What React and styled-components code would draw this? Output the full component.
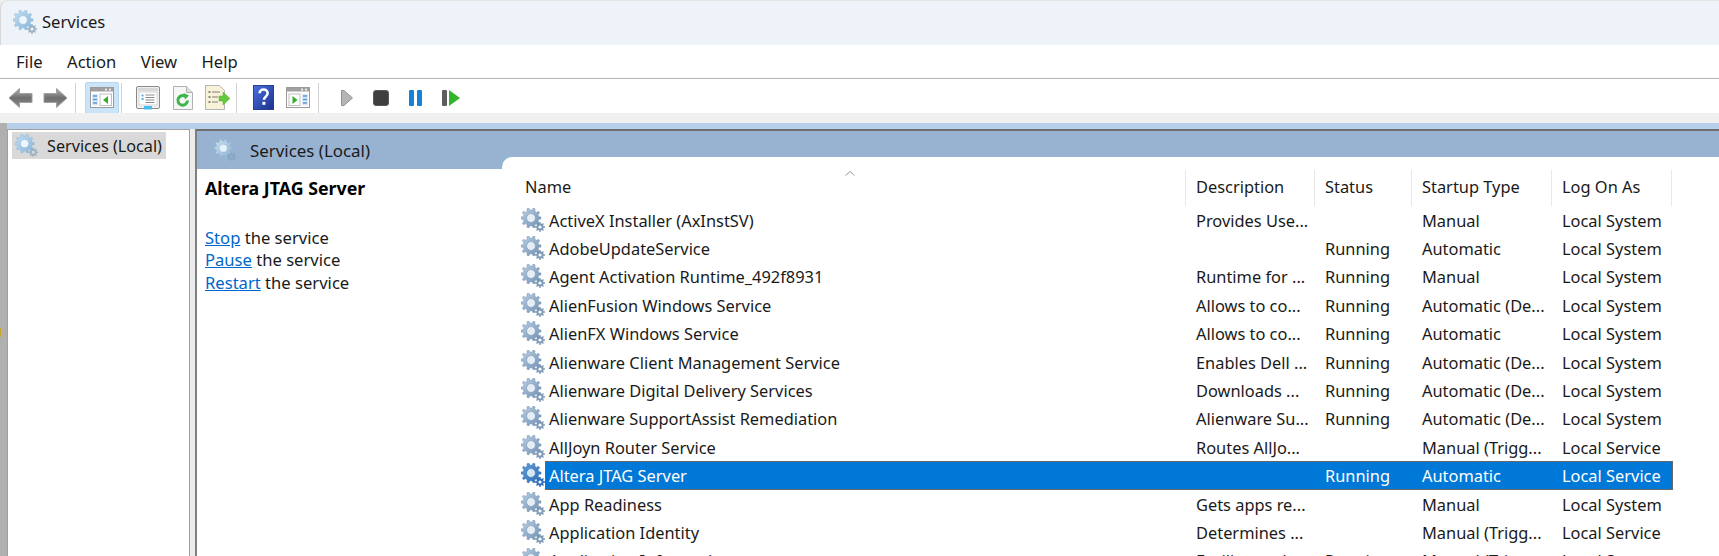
import React from "react";
import styled, { createGlobalStyle } from "styled-components";

const services = [
  { name: "ActiveX Installer (AxInstSV)", description: "Provides Use...", status: "", startup: "Manual", logon: "Local System" },
  { name: "AdobeUpdateService", description: "", status: "Running", startup: "Automatic", logon: "Local System" },
  { name: "Agent Activation Runtime_492f8931", description: "Runtime for ...", status: "Running", startup: "Manual", logon: "Local System" },
  { name: "AlienFusion Windows Service", description: "Allows to co...", status: "Running", startup: "Automatic (De...", logon: "Local System" },
  { name: "AlienFX Windows Service", description: "Allows to co...", status: "Running", startup: "Automatic", logon: "Local System" },
  { name: "Alienware Client Management Service", description: "Enables Dell ...", status: "Running", startup: "Automatic (De...", logon: "Local System" },
  { name: "Alienware Digital Delivery Services", description: "Downloads ...", status: "Running", startup: "Automatic (De...", logon: "Local System" },
  { name: "Alienware SupportAssist Remediation", description: "Alienware Su...", status: "Running", startup: "Automatic (De...", logon: "Local System" },
  { name: "AllJoyn Router Service", description: "Routes AllJo...", status: "", startup: "Manual (Trigg...", logon: "Local Service" },
  { name: "Altera JTAG Server", description: "", status: "Running", startup: "Automatic", logon: "Local Service", selected: true },
  { name: "App Readiness", description: "Gets apps re...", status: "", startup: "Manual", logon: "Local System" },
  { name: "Application Identity", description: "Determines ...", status: "", startup: "Manual (Trigg...", logon: "Local Service" },
  { name: "Application Information", description: "Facilitates th...", status: "Running", startup: "Manual (Trigg...", logon: "Local System" }
];

const columns = [640, 129, 97, 140, 120];

const gearPath = (cx, cy, outer, inner, hole, teeth) => {
  const step = (Math.PI * 2) / teeth;
  let d = "";
  for (let i = 0; i < teeth; i++) {
    const a = i * step;
    const pts = [
      [inner, a - step * 0.5],
      [inner, a - step * 0.28],
      [outer, a - step * 0.17],
      [outer, a + step * 0.17],
      [inner, a + step * 0.28]
    ];
    pts.forEach(([r, t], j) => {
      const x = (cx + r * Math.cos(t)).toFixed(2);
      const y = (cy + r * Math.sin(t)).toFixed(2);
      d += `${i === 0 && j === 0 ? "M" : "L"}${x} ${y}`;
    });
  }
  d += "Z";
  d += `M${cx + hole} ${cy}A${hole} ${hole} 0 1 0 ${cx - hole} ${cy}A${hole} ${hole} 0 1 0 ${cx + hole} ${cy}Z`;
  return d;
};

const BIG_GEAR = gearPath(10, 10, 10, 7.8, 4.4, 10);
const SMALL_GEAR = gearPath(19, 19, 5, 3.6, 1.6, 8);

const GearIcon = ({ size = 25, tone = "normal" }) => {
  const id = `gear-${tone}`;
  const colors = {
    normal: ["#bcd0e4", "#6f8fb2", "#7f9ab8", "#e6eef5"],
    soft: ["#c5e0f3", "#86b4da", "#9cb3c4", "#eef6fb"],
    muted: ["#c9e2f2", "#8fb4d2", "#86a6c2", "#e6f2f9"],
    selected: ["#5f9fd6", "#2e6cb4", "#2f70b8", "#d5e6f5"]
  }[tone];
  return (
    <svg width={size} height={size} viewBox="0 0 25 25">
      <defs>
        <linearGradient id={id} x1="0" y1="0" x2="1" y2="1">
          <stop offset="0" stopColor={colors[0]} />
          <stop offset="1" stopColor={colors[1]} />
        </linearGradient>
      </defs>
      <path d={SMALL_GEAR} fill={colors[2]} fillRule="evenodd" />
      <circle cx="10" cy="10" r="4.6" fill={colors[3]} />
      <path d={BIG_GEAR} fill={`url(#${id})`} fillRule="evenodd" stroke={colors[1]} strokeWidth="0.5" />
    </svg>
  );
};

const ArrowIcon = ({ flip }) => (
  <svg width="25" height="22" viewBox="0 0 25 22" style={flip ? { transform: "scaleX(-1)" } : undefined}>
    <defs>
      <linearGradient id="arrow-grey" x1="0" y1="0" x2="0" y2="1">
        <stop offset="0" stopColor="#b0b0b0" />
        <stop offset="0.5" stopColor="#6e6e6e" />
        <stop offset="1" stopColor="#8c8c8c" />
      </linearGradient>
    </defs>
    <path d="M1 11 11.500 1.500v5h12.500v9H11.500v5z" fill="url(#arrow-grey)" stroke="#a0a0a0" strokeWidth="1" strokeLinejoin="round" />
  </svg>
);

const PanelIcon = ({ right }) => (
  <svg width="24" height="21" viewBox="0 0 24 21">
    <rect x="0.5" y="0.5" width="23" height="20" fill="#fff" stroke="#9a9a9a" />
    <rect x="1" y="1" width="22" height="3.500" fill="#a0a0a0" />
    <rect x="15" y="1.600" width="2" height="2" fill="#e8e8e8" />
    <rect x="19" y="1.600" width="2" height="2" fill="#e8e8e8" />
    {right ? (
      <>
        <rect x="3" y="7" width="11" height="11.500" fill="#fff" stroke="#c0c0c0" />
        <path d="M6.500 9 11.500 13l-5 4z" fill="#33b02a" />
        <rect x="16" y="7" width="6" height="11.500" fill="#d8e8f6" />
        <path d="M17 9h4M17 12.500h4M17 16h4" stroke="#5c9ad8" strokeWidth="1.600" />
      </>
    ) : (
      <>
        <rect x="2" y="7" width="6" height="11.500" fill="#d8e8f6" />
        <path d="M3 9h4M3 12.500h4M3 16h4" stroke="#5c9ad8" strokeWidth="1.600" />
        <rect x="10" y="7" width="11.500" height="11.500" fill="#fff" stroke="#c0c0c0" />
        <path d="M18 9 13 13l5 4z" fill="#33b02a" />
      </>
    )}
  </svg>
);

const PropertiesIcon = () => (
  <svg width="24" height="24" viewBox="0 0 24 24">
    <rect x="0.5" y="0.5" width="23" height="22" rx="1.500" fill="#f0f0f0" stroke="#8a8a8a" />
    <rect x="2" y="2" width="20" height="3" fill="#d8d8d8" />
    <rect x="3" y="6" width="18" height="13" fill="#fff" stroke="#d5d5d5" />
    <path d="M5.500 9.500h2M5.500 13h2" stroke="#52b0e8" strokeWidth="2" />
    <path d="M9.500 9h9M9.500 11.500h9M9.500 14h9M9.500 16.500h9" stroke="#8a8a8a" strokeWidth="1" />
    <rect x="8" y="20" width="8" height="3.500" fill="#45bdec" />
  </svg>
);

const RefreshIcon = () => (
  <svg width="20" height="24" viewBox="0 0 20 24">
    <path d="M.5.500h13l6 6v17H.5z" fill="#f6f6f6" stroke="#b0b0b0" />
    <path d="M13.500.500v6h6" fill="#e0e0e0" stroke="#b0b0b0" />
    <path d="M14.500 14.500a4.800 4.800 0 1 1-2-4" fill="none" stroke="#3cb648" strokeWidth="3" />
    <path d="M10.500 7 16 9.500l-4 4z" fill="#3cb648" />
  </svg>
);

const ExportIcon = () => (
  <svg width="26" height="25" viewBox="0 0 26 25">
    <path d="M.5.500h14l5 5v19H.5z" fill="#f7f2d8" stroke="#b5b5b5" />
    <path d="M3.500 7h2M3.500 12h2M3.500 17h2" stroke="#666" strokeWidth="1.500" />
    <path d="M7 7h8M7 12h6M7 17h6" stroke="#808080" strokeWidth="1.200" />
    <path d="M14 11h4V7l7 6.500-7 6.500v-4h-4z" fill="#66c83e" stroke="#57b032" strokeWidth="0.500" />
  </svg>
);

const HelpIcon = () => (
  <svg width="21" height="25" viewBox="0 0 21 25">
    <defs>
      <linearGradient id="help-blue" x1="0" y1="0" x2="1" y2="1">
        <stop offset="0" stopColor="#4a72e0" />
        <stop offset="1" stopColor="#1c2f8c" />
      </linearGradient>
    </defs>
    <rect x="0.5" y="0.5" width="20" height="24" fill="url(#help-blue)" stroke="#27408f" />
    <path d="M6.600 8.200c0-5 8-5 8 0 0 3.400-3.600 3.400-3.600 6.600" fill="none" stroke="#fff" strokeWidth="2.600" />
    <rect x="9.400" y="16.800" width="3" height="3" fill="#fff" />
  </svg>
);

const PlayIcon = () => (
  <svg width="12" height="16" viewBox="0 0 12 16">
    <path d="M.5.500h2.500L11.500 8 3 15.500H.5z" fill="#b5b5b5" stroke="#949494" />
  </svg>
);

const StopIcon = () => (
  <svg width="16" height="16" viewBox="0 0 16 16">
    <rect x="0.5" y="0.5" width="15" height="15" rx="2.500" fill="#3f3f3f" stroke="#5a5a5a" />
  </svg>
);

const PauseIcon = () => (
  <svg width="13" height="16" viewBox="0 0 13 16">
    <rect x="0" y="0" width="5" height="16" rx="1" fill="#1683d8" />
    <rect x="8" y="0" width="5" height="16" rx="1" fill="#1683d8" />
  </svg>
);

const ResumeIcon = () => (
  <svg width="18" height="16" viewBox="0 0 18 16">
    <rect x="0" y="0" width="5" height="16" rx="1" fill="#5e5e5e" />
    <path d="M7 0 18 8 7 16z" fill="#31b52b" />
  </svg>
);

export default function App() {
  return (
    <Page>
      <GlobalStyle />
      <TitleBar>
        <GearIcon size={25} tone="soft" />
        <TitleText>Services</TitleText>
      </TitleBar>
      <MenuBar>
        <MenuItem>File</MenuItem>
        <MenuItem>Action</MenuItem>
        <MenuItem>View</MenuItem>
        <MenuItem>Help</MenuItem>
      </MenuBar>
      <Toolbar>
        <ToolGroup pad="0 7px 0 8px" gap={10}>
          <ArrowIcon />
          <ArrowIcon flip />
        </ToolGroup>
        <Separator />
        <ActiveTool><PanelIcon /></ActiveTool>
        <Separator />
        <ToolGroup pad="0 5px 0 14px" gap={12.5}>
          <PropertiesIcon />
          <RefreshIcon />
          <ExportIcon />
        </ToolGroup>
        <Separator />
        <ToolGroup pad="0 8px 0 16px" gap={12}>
          <HelpIcon />
          <PanelIcon right />
        </ToolGroup>
        <Separator />
        <ToolGroup pad="0 0 0 22px" gap={20}>
          <PlayIcon />
          <StopIcon />
          <PauseIcon />
          <ResumeIcon />
        </ToolGroup>
      </Toolbar>
      <GreyStrip />
      <Lower>
        <EdgeMark />
        <BlueStrip />
        <Workspace>
          <TreePane>
            <TreeNode>
              <GearIcon size={24} tone="soft" />
              <span>Services (Local)</span>
            </TreeNode>
          </TreePane>
          <ContentPane>
            <PaneHeader>
              <PaneTitle>
                <GearIcon size={23} tone="muted" />
                <span>Services (Local)</span>
              </PaneTitle>
              <PaneNotch />
            </PaneHeader>
            <PaneBody>
              <DetailColumn>
                <DetailName>Altera JTAG Server</DetailName>
                <DetailAction><ActionLink>Stop</ActionLink> the service</DetailAction>
                <DetailAction><ActionLink>Pause</ActionLink> the service</DetailAction>
                <DetailAction><ActionLink>Restart</ActionLink> the service</DetailAction>
              </DetailColumn>
              <ServiceTable>
                <HeaderRow>
                  <NameHeader>
                    Name
                    <SortCaret viewBox="0 0 10 5" width="10" height="5">
                      <path d="M.5 4.500 5 .5l4.500 4" fill="none" stroke="#9a9a9a" />
                    </SortCaret>
                  </NameHeader>
                  <HeaderCell width={columns[1]}>Description</HeaderCell>
                  <HeaderCell width={columns[2]}>Status</HeaderCell>
                  <HeaderCell width={columns[3]}>Startup Type</HeaderCell>
                  <HeaderCell width={columns[4]}>Log On As</HeaderCell>
                </HeaderRow>
                {services.map(service => (
                  <Row key={service.name}>
                    <RowIcon>
                      <GearIcon size={25} tone={service.selected ? "selected" : "normal"} />
                    </RowIcon>
                    <Cells selected={service.selected}>
                      <NameCell width={columns[0]}>{service.name}</NameCell>
                      <Cell width={columns[1]}>{service.description}</Cell>
                      <Cell width={columns[2]}>{service.status}</Cell>
                      <Cell width={columns[3]}>{service.startup}</Cell>
                      <Cell width={columns[4]}>{service.logon}</Cell>
                    </Cells>
                  </Row>
                ))}
              </ServiceTable>
            </PaneBody>
          </ContentPane>
        </Workspace>
      </Lower>
    </Page>
  );
}

const GlobalStyle = createGlobalStyle`
  html, body {
    margin: 0;
    padding: 0;
    height: 100%;
    overflow: hidden;
    background: #f0f0f0;
  }
  svg {
    display: block;
    flex: none;
  }
`;

const Page = styled.div`
  width: 1719px;
  height: 556px;
  overflow: hidden;
  display: flex;
  flex-direction: column;
  font-family: "Noto Sans", "Liberation Sans", sans-serif;
  font-size: 16.4px;
  color: #1a1a1a;
  background: #f0f0f0;
`;

const TitleBar = styled.div`
  height: 45px;
  flex: none;
  display: flex;
  align-items: center;
  gap: 4px;
  padding: 0 0 1px 12px;
  box-sizing: border-box;
  background: #eef2f9;
  border-top-left-radius: 8px;
  border-left: 1px solid #d8d8d8;
  border-top: 1px solid #e4e4e4;
`;

const TitleText = styled.span`
  font-size: 16.6px;
  margin-bottom: 2px;
`;

const MenuBar = styled.div`
  height: 34px;
  flex: none;
  box-sizing: border-box;
  display: flex;
  align-items: center;
  gap: 24.5px;
  padding-left: 16px;
  background: #fff;
  border-bottom: 1px solid #b4b4b4;
`;

const MenuItem = styled.span`
  font-size: 16.6px;
`;

const Toolbar = styled.div`
  height: 34px;
  flex: none;
  display: flex;
  align-items: center;
  padding-top: 3px;
  box-sizing: border-box;
  background: #fff;
`;

const ToolGroup = styled.div`
  display: flex;
  flex: none;
  align-items: center;
  padding: ${props => props.pad};
  gap: ${props => props.gap}px;
`;

const ActiveTool = styled.div`
  width: 34px;
  height: 32px;
  flex: none;
  margin: 0 2px 0 9px;
  display: flex;
  align-items: center;
  justify-content: center;
  box-sizing: border-box;
  background: #cce4f7;
  border: 1px solid #b4d7f2;
  border-radius: 2px;
`;

const Separator = styled.div`
  width: 1px;
  height: 30px;
  flex: none;
  background: #d0d0d0;
`;

const GreyStrip = styled.div`
  height: 10px;
  flex: none;
  background: #f0f0f0;
`;

const Lower = styled.div`
  position: relative;
  flex: 1;
  min-height: 0;
  display: flex;
  flex-direction: column;
  padding-left: 7px;
  background: #b0b0b0;
`;

const EdgeMark = styled.div`
  position: absolute;
  left: 0;
  top: 205px;
  width: 1px;
  height: 9px;
  background: #c8a82c;
`;

const BlueStrip = styled.div`
  height: 6px;
  flex: none;
  background: #b7cfe8;
`;

const Workspace = styled.div`
  flex: 1;
  min-height: 0;
  display: flex;
  background: #ececec;
`;

const TreePane = styled.div`
  width: 183px;
  flex: none;
  box-sizing: border-box;
  padding: 2px 0 0 4px;
  background: #fff;
  border-top: 1px solid #a0a0a0;
  border-left: 1px solid #a0a0a0;
  border-right: 1px solid #a0a0a0;
`;

const TreeNode = styled.div`
  width: 154px;
  height: 27px;
  display: flex;
  align-items: center;
  gap: 8px;
  font-size: 16.2px;
  background: #d9d9d9;
  padding-left: 3px;
  box-sizing: border-box;
`;

const ContentPane = styled.div`
  flex: 1;
  min-width: 0;
  margin-left: 5px;
  display: flex;
  flex-direction: column;
  background: #fff;
  border-top: 2px solid #6e6e6e;
  border-left: 2px solid #808080;
`;

const PaneHeader = styled.div`
  height: 38px;
  flex: none;
  display: flex;
  background: #98b3d1;
`;

const PaneTitle = styled.div`
  width: 305px;
  flex: none;
  display: flex;
  align-items: center;
  gap: 13px;
  padding-left: 17px;
  box-sizing: border-box;
  font-size: 16.9px;
`;

const PaneNotch = styled.div`
  flex: 1;
  height: 12px;
  align-self: flex-end;
  background: #fff;
  border-top-left-radius: 10px;
`;

const PaneBody = styled.div`
  flex: 1;
  min-height: 0;
  display: flex;
`;

const DetailColumn = styled.div`
  width: 324px;
  flex: none;
  box-sizing: border-box;
  padding: 7px 0 0 8px;
`;

const DetailName = styled.div`
  font-weight: 700;
  font-size: 17.8px;
  line-height: 24px;
  color: #000;
  margin-bottom: 27px;
`;

const DetailAction = styled.div`
  font-size: 16.6px;
  line-height: 22.4px;
`;

const ActionLink = styled.a`
  color: #0066cc;
  text-decoration: underline;
`;

const ServiceTable = styled.div`
  flex: 1;
  min-width: 0;
  display: flex;
  flex-direction: column;
`;

const HeaderRow = styled.div`
  height: 36px;
  flex: none;
  display: flex;
  margin-top: 1px;
  line-height: 34px;
`;

const HeaderCell = styled.div`
  width: ${props => props.width}px;
  flex: none;
  box-sizing: border-box;
  padding: 0 0 2px 10px;
  display: flex;
  align-items: center;
  border-right: 1px solid #e8e8e8;
`;

const NameHeader = styled(HeaderCell)`
  position: relative;
  width: 665px;
  padding-left: 4px;
`;

const SortCaret = styled.svg`
  position: absolute;
  top: 1px;
  left: 324px;
`;

const Row = styled.div`
  height: 28.4px;
  flex: none;
  display: flex;
  align-items: center;
`;

const RowIcon = styled.div`
  width: 25px;
  flex: none;
`;

const Cells = styled.div`
  display: flex;
  height: 27px;
  align-items: center;
  background: ${props => (props.selected ? "#0078d7" : "transparent")};
  color: ${props => (props.selected ? "#fff" : "#1a1a1a")};
  outline: ${props => (props.selected ? "1px solid #666" : "none")};
`;

const Cell = styled.div`
  width: ${props => props.width}px;
  flex: none;
  box-sizing: border-box;
  padding-left: 10px;
  white-space: nowrap;
  overflow: hidden;
`;

const NameCell = styled(Cell)`
  padding-left: 3px;
`;
